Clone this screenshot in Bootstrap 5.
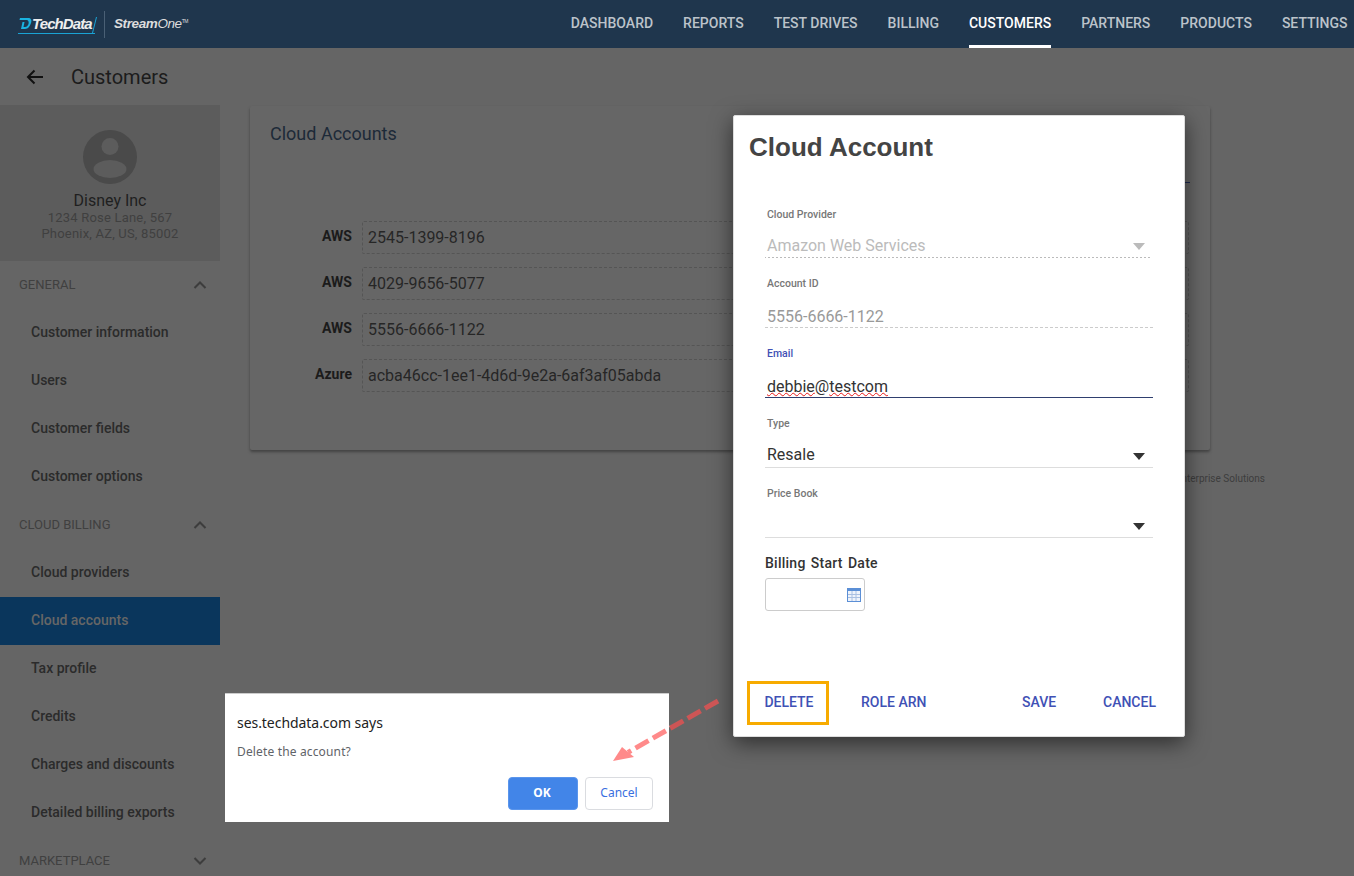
<!DOCTYPE html>
<html lang="en">
<head>
<meta charset="utf-8">
<title>Customers</title>
<link href="https://cdn.jsdelivr.net/npm/bootstrap@5.3.0/dist/css/bootstrap.min.css" rel="stylesheet">
<style>
html,body{height:100%;overflow:hidden}
body{font-family:Roboto,"Liberation Sans",sans-serif;background:#656565;color:#222;position:relative}
.topbar{height:48px;background:#1f364d;padding:0 6.500px 0 18px}
.brand-td{font-family:"Liberation Sans",sans-serif;font-weight:700;font-style:italic;font-size:15px;color:#eee;letter-spacing:-.9px;line-height:1}
.brand-so{font-family:"Liberation Sans",sans-serif;font-style:italic;font-size:13.5px;color:#ddd;letter-spacing:-.4px;line-height:1}
.brand-so b{font-weight:700}
.brand-so sup{font-size:5px;top:-1em;font-style:normal}
.brand-box{position:relative;border-bottom:1px solid #1aa3d5;padding:0 3px 2px 0;width:77px;transform:translateY(1px)}
.brand-box::after{content:"";position:absolute;right:0;bottom:0;width:1px;height:16px;background:#1aa3d5;transform:skewX(-14deg)}
.brand-sep{width:1px;height:27px;background:#4a6075;margin:0 9px 0 9px}
.topnav{gap:30px}
.topnav a{display:block;height:48px;line-height:47px;color:#bcc3ca;font-size:14px;font-weight:500;text-decoration:none;text-transform:uppercase}
.topnav a.on{color:#fff;border-bottom:3px solid #fff}
.subbar{height:57px;padding-left:26px}
.subbar h1{font-size:20px;font-weight:400;margin:0 0 0 27px;color:#1c1c1c}
.side{width:220px;flex:none}
.prof{height:156px;background:#5c5c5c;text-align:center;padding-top:25px}
.prof .pn{font-size:16px;line-height:19px;margin-top:7px;color:#1f1f1f}
.prof .pa{font-size:13px;line-height:16px;color:#404040;letter-spacing:.2px}
.sec{height:48px;padding:0 13px 0 19px;font-size:13px;color:#404040;text-transform:uppercase}
.item{height:48px;line-height:46px;padding-left:31px;font-size:14px;font-weight:500;color:#2b2b2b}
.item.on{background:#0a365c;color:#666}
.cardish{margin:1px 0 0 30px;width:960px;height:344px;background:#666;border-radius:2px;box-shadow:0 2px 3px rgba(0,0,0,.35);padding:16px 20px}
.cardish h2{font-size:18px;font-weight:400;margin:0;line-height:24px;color:#1d2a38}
.cardrule{height:1px;width:200px;margin:36px 0 0 auto;background:#1f2a50}
.acct{margin-top:38px;margin-left:-20px}
.arow{height:46px;display:flex}
.arow label{width:102px;text-align:right;font-size:14px;font-weight:700;line-height:31px;color:#1b1b1b;flex:none}
.arow .val{margin-left:10px;width:827px;height:33px;border:1px dashed #555;border-radius:2px;font-size:16px;line-height:31px;padding-left:5px;color:#262626}
.foot{position:absolute;left:1100px;top:471px;font-size:10px;color:#3d3d3d;width:165px;text-align:right}
.dlg{position:absolute;left:733px;top:115px;width:452px;height:622px;background:#fff;border-radius:2px;border:1px solid #ddd;box-shadow:0 6px 22px rgba(0,0,0,.55);padding:0 32px 0 31px}
.dlg h3{font-size:26px;font-weight:700;color:#444;margin:13px 0 0 -16px;line-height:36px;font-family:"Liberation Sans",sans-serif}
.fld{height:70px;position:relative;padding-left:2px}
.fld .lb{display:block;font-size:10.5px;font-weight:500;color:#777;line-height:14px}
.fld.dis .lb{padding-top:1px}
.fld .vl{position:absolute;left:0;right:-1px;top:21px;height:30px;padding-left:2px;line-height:33px;font-size:16px;color:#333;border-bottom:1px solid #ddd}
.fld.dis .vl{color:#bbb;border-bottom:0;right:1px;line-height:35px;background-image:linear-gradient(90deg,#bbb 50%,transparent 50%);background-size:4px 1px;background-repeat:repeat-x;background-position:bottom}
.fld.dis2 .vl{color:#999;line-height:37px;border-bottom:1px dashed #ccc}
.fld.act .lb{color:#3f51b5}
.fld.act .vl{line-height:37px;border-bottom:1px solid #2f3f6f}
.wavy{text-decoration:underline wavy #e81818 1px;text-underline-offset:0;text-decoration-skip-ink:none}
.caret{position:absolute;right:8px;top:15px;width:0;height:0;border-left:6px solid transparent;border-right:6px solid transparent;border-top:7px solid #333}
.fld.dis .caret{border-top-color:#bbb;right:6px}
.bsd{font-size:14px;font-weight:500;color:#333;line-height:18px;margin-top:-3px;letter-spacing:.25px;word-spacing:1.500px}
.datebox{width:100px;height:33px;border:1px solid #ccc;border-radius:3px;margin-top:6px;padding:0 3px 0 0}
.acts{position:absolute;left:14px;right:14px;top:565px;height:43px}
.acts span{color:#3f51b5;font-size:14px;font-weight:500;text-transform:uppercase}
.delbox{position:absolute;left:-1px;top:0;width:82px;height:44px;border:3px solid #f7ab00;display:flex;align-items:center;justify-content:center;padding:0 0 2px 2px}
.acts .lnk{position:absolute;top:11px}
.alertb{position:absolute;left:225px;top:693px;width:444px;height:129px;background:#fff;border-top:1px solid #ccc;padding:19px 12px}
.alertb .t{font-family:"Noto Sans","Open Sans",sans-serif;font-size:14px;line-height:20px;color:#222;letter-spacing:-.05px}
.alertb .m{font-family:"Noto Sans","Open Sans",sans-serif;font-size:12px;line-height:18px;margin-top:10px;color:#5f6368;letter-spacing:.15px}
.abtn{position:absolute;top:83px;height:33px;border-radius:4px;font-size:12px;line-height:29px;text-align:center;font-family:"Noto Sans",Roboto,sans-serif}
.abtn.ok{left:283px;width:70px;padding-right:2px;background:#4285e8;color:#fff;font-weight:700;border:1px solid #5a95ec}
.abtn.no{left:360px;width:68px;background:#fff;color:#3a6fe0;border:1px solid #dadce0}
.arrowsvg{position:absolute;left:600px;top:690px}
</style>
</head>
<body>
<header class="topbar d-flex align-items-center justify-content-between">
  <div class="d-flex align-items-center">
    <div class="brand-box d-flex align-items-center">
      <svg width="14" height="13" viewBox="0 0 14 13"><path d="M2 1h8c3 0 4 2 3 5s-3 6-6 6H3l1.500-7H6.500L5.500 10H7c2 0 3-1.500 3.500-3S10.500 3 9 3H1.500z" fill="#1ab3e0"/></svg>
      <span class="brand-td">TechData</span>
    </div>
    <div class="brand-sep"></div>
    <span class="brand-so"><b>Stream</b>One<sup>TM</sup></span>
  </div>
  <nav class="topnav d-flex">
    <a href="#">Dashboard</a><a href="#">Reports</a><a href="#">Test Drives</a><a href="#">Billing</a><a href="#" class="on">Customers</a><a href="#">Partners</a><a href="#">Products</a><a href="#">Settings</a>
  </nav>
</header>
<div class="subbar d-flex align-items-center">
  <svg width="18" height="16" viewBox="0 0 18 16"><path d="M17 8H2M8.500 1.500 2 8l6.500 6.500" fill="none" stroke="#111" stroke-width="2"/></svg>
  <h1>Customers</h1>
</div>
<div class="d-flex">
  <aside class="side">
    <div class="prof">
      <svg width="54" height="54" viewBox="0 0 54 54"><circle cx="27" cy="27" r="27" fill="#4a4a4a"/><circle cx="27" cy="16.500" r="8.500" fill="#5c5c5c"/><ellipse cx="27" cy="39" rx="16.500" ry="9" fill="#5c5c5c"/></svg>
      <div class="pn">Disney Inc</div>
      <div class="pa">1234 Rose Lane, 567</div>
      <div class="pa">Phoenix, AZ, US, 85002</div>
    </div>
    <div class="sec d-flex align-items-center justify-content-between">General<svg width="14" height="8" viewBox="0 0 14 8"><path d="M1.500 7 7 1.500 12.500 7" fill="none" stroke="#3d3d3d" stroke-width="2"/></svg></div>
    <div class="item">Customer information</div>
    <div class="item">Users</div>
    <div class="item">Customer fields</div>
    <div class="item">Customer options</div>
    <div class="sec d-flex align-items-center justify-content-between">Cloud Billing<svg width="14" height="8" viewBox="0 0 14 8"><path d="M1.500 7 7 1.500 12.500 7" fill="none" stroke="#3d3d3d" stroke-width="2"/></svg></div>
    <div class="item">Cloud providers</div>
    <div class="item on">Cloud accounts</div>
    <div class="item">Tax profile</div>
    <div class="item">Credits</div>
    <div class="item">Charges and discounts</div>
    <div class="item">Detailed billing exports</div>
    <div class="sec d-flex align-items-center justify-content-between">Marketplace<svg width="14" height="8" viewBox="0 0 14 8"><path d="M1.500 1 7 6.500 12.500 1" fill="none" stroke="#3d3d3d" stroke-width="2"/></svg></div>
  </aside>
  <main class="flex-grow-1">
    <section class="cardish">
      <h2>Cloud Accounts</h2>
      <div class="cardrule"></div>
      <div class="acct">
        <div class="arow"><label>AWS</label><div class="val">2545-1399-8196</div></div>
        <div class="arow"><label>AWS</label><div class="val">4029-9656-5077</div></div>
        <div class="arow"><label>AWS</label><div class="val">5556-6666-1122</div></div>
        <div class="arow"><label>Azure</label><div class="val">acba46cc-1ee1-4d6d-9e2a-6af3af05abda</div></div>
      </div>
    </section>
  </main>
</div>
<div class="foot">Enterprise Solutions</div>

<div class="dlg">
  <h3>Cloud Account</h3>
  <div style="height:42px"></div>
  <div class="fld dis"><span class="lb">Cloud Provider</span><div class="vl">Amazon Web Services<i class="caret"></i></div></div>
  <div class="fld dis2"><span class="lb">Account ID</span><div class="vl">5556-6666-1122</div></div>
  <div class="fld act"><span class="lb">Email</span><div class="vl"><span class="wavy">debbie</span>@<span class="wavy">testcom</span></div></div>
  <div class="fld"><span class="lb">Type</span><div class="vl">Resale<i class="caret"></i></div></div>
  <div class="fld"><span class="lb">Price Book</span><div class="vl"><i class="caret"></i></div></div>
  <div class="bsd">Billing Start Date</div>
  <div class="datebox d-flex align-items-center justify-content-end">
    <svg width="14" height="14" viewBox="0 0 14 14"><rect width="14" height="14" fill="#5b8fd6"/><rect x="1" y="3" width="12" height="10" fill="#eef3fb"/><path d="M1 6.500h12M1 9.500h12M5 3v10M9 3v10" stroke="#a9c0e2" stroke-width="1"/></svg>
  </div>
  <div class="acts">
    <div class="delbox"><span>Delete</span></div>
    <span class="lnk" style="left:113px">Role ARN</span>
    <span class="lnk" style="left:274px">Save</span>
    <span class="lnk" style="left:355px">Cancel</span>
  </div>
</div>

<div class="alertb">
  <div class="t">ses.techdata.com says</div>
  <div class="m">Delete the account?</div>
  <div class="abtn ok">OK</div>
  <div class="abtn no">Cancel</div>
</div>

<svg class="arrowsvg" width="130" height="85" viewBox="0 0 130 85">
  <defs><linearGradient id="ag" gradientUnits="userSpaceOnUse" x1="0" y1="0" x2="130" y2="0"><stop offset="0.538" stop-color="#ff8a8a"/><stop offset="0.538" stop-color="#cd5555"/></linearGradient></defs>
  <path d="M118 11 28 62.400" fill="none" stroke="url(#ag)" stroke-width="5" stroke-dasharray="15 5"/>
  <path d="M13 71 22 57 34 67z" fill="#ff8a8a"/>
</svg>
<script src="https://cdn.jsdelivr.net/npm/bootstrap@5.3.0/dist/js/bootstrap.bundle.min.js"></script>
</body>
</html>
